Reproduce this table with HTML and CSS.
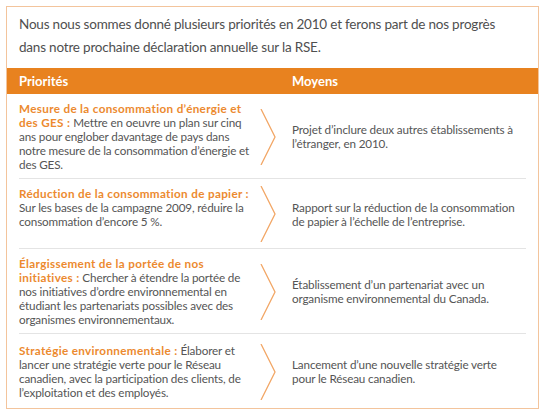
FILE: index.html
```html
<!DOCTYPE html>
<html lang="fr">
<head>
    <meta charset="UTF-8">
    <meta name="viewport" content="width=device-width, initial-scale=1.0">
    <title>Priorités et moyens</title>
    <link rel="stylesheet" href="styles.css">
</head>
<body>
    <div class="panel">
        <p class="intro">Nous nous sommes donné plusieurs priorités en 2010 et ferons part de nos progrès dans notre prochaine déclaration annuelle sur la RSE.</p>
        <div class="head">
            <div>Priorités</div>
            <div></div>
            <div>Moyens</div>
        </div>
        <div class="rows">
            <div class="row">
                <div class="goal"><b>Mesure de la consommation d’énergie et des GES :</b> Mettre en oeuvre un plan sur cinq ans pour englober davantage de pays dans notre mesure de la consommation d’énergie et des GES.</div>
                <svg class="arrow" width="16" height="56" viewBox="0 0 16 56"><polyline points="1,0 15,28 1,56" /></svg>
                <div class="means">Projet d’inclure deux autres établissements à l’étranger, en 2010.</div>
            </div>
            <div class="row">
                <div class="goal"><b>Réduction de la consommation de papier :</b> Sur les bases de la campagne 2009, réduire la consommation d’encore 5 %.</div>
                <svg class="arrow" width="16" height="56" viewBox="0 0 16 56"><polyline points="1,0 15,28 1,56" /></svg>
                <div class="means">Rapport sur la réduction de la consommation de papier à l’échelle de l’entreprise.</div>
            </div>
            <div class="row">
                <div class="goal"><b>Élargissement de la portée de nos initiatives :</b> Chercher à étendre la portée de nos initiatives d’ordre environnemental en étudiant les partenariats possibles avec des organismes environnementaux.</div>
                <svg class="arrow" width="16" height="56" viewBox="0 0 16 56"><polyline points="1,0 15,28 1,56" /></svg>
                <div class="means">Établissement d’un partenariat avec un organisme environnemental du Canada.</div>
            </div>
            <div class="row">
                <div class="goal"><b>Stratégie environnementale :</b> Élaborer et lancer une stratégie verte pour le Réseau canadien, avec la participation des clients, de l’exploitation et des employés.</div>
                <svg class="arrow" width="16" height="56" viewBox="0 0 16 56"><polyline points="1,0 15,28 1,56" /></svg>
                <div class="means">Lancement d’une nouvelle stratégie verte pour le Réseau canadien.</div>
            </div>
        </div>
    </div>
</body>
</html>
```

FILE: styles.css
```css
body{
    margin:0px;
    padding:0px;
    background-color:#ffffff;
    font-family: Lato, "Noto Sans", sans-serif;
    color:#555555;
}
.panel{
    box-sizing: border-box;
    width: 533px;
    margin: 6px 0 0 6px;
    border: 1px solid #f3c49c;
    background-color: #ffffff;
}
.intro{
    margin: 0;
    padding: 6px 22px 9px 12px;
    font-size: 13.5px;
    letter-spacing: -0.2px;
    line-height: 23px;
    color:#4f4f4f;
}
.head{
    display: grid;
    grid-template-columns: 238px 35px 1fr;
    height: 26px;
    align-items: center;
    padding: 0 12px;
    background-color: #e8821f;
    color: #ffffff;
    font-weight: bold;
    font-size: 13px;
}
.rows{
    padding: 0 12px;
}
.row{
    display: grid;
    grid-template-columns: 238px 35px 1fr;
    align-items: center;
    border-bottom: 1px solid #e4e4e4;
}
.row:last-child{
    border-bottom: none;
}
.goal{
    align-self: start;
    padding: 7px 0 7px 0;
    font-size: 11.7px;
    letter-spacing: -0.15px;
    line-height: 14px;
}
.row:last-child .goal{
    padding: 9px 0 9px 0;
}
.goal b{
    color: #ec8a2f;
    letter-spacing: 0.33px;
}
.arrow{
    margin: 7px 0 6px 3px;
}
.arrow polyline{
    fill: none;
    stroke: #f2a766;
    stroke-width: 1.3;
}
.means{
    font-size: 11.7px;
    letter-spacing: -0.15px;
    line-height: 14px;
    padding-right: 4px;
}
```
